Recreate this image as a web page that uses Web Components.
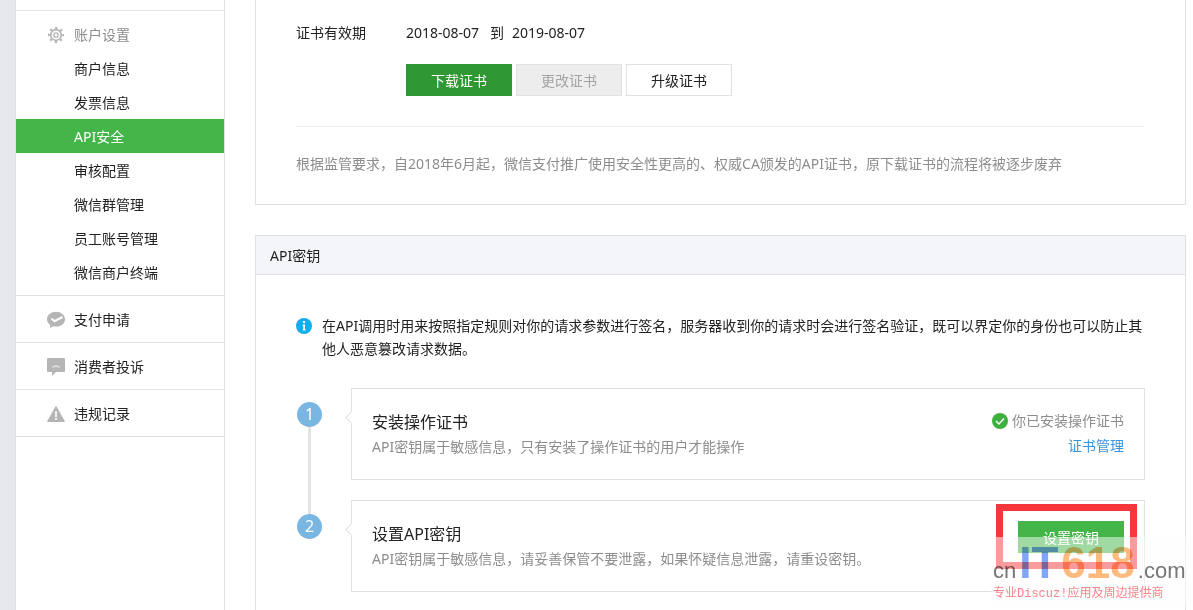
<!DOCTYPE html>
<html lang="zh-CN">
<head>
<meta charset="utf-8">
<title>API安全</title>
<style>
  body {
    margin: 0;
    font: 14px/22px "Noto Sans", "Noto Sans CJK SC", sans-serif;
    color: #222;
    background: #fff;
  }
</style>
</head>
<body>
<merchant-page>
  <side-menu slot="menu">
    <menu-group label="账户设置" icon="gear">
      <menu-item>商户信息</menu-item>
      <menu-item>发票信息</menu-item>
      <menu-item active>API安全</menu-item>
      <menu-item>审核配置</menu-item>
      <menu-item>微信群管理</menu-item>
      <menu-item>员工账号管理</menu-item>
      <menu-item>微信商户终端</menu-item>
    </menu-group>
    <menu-group label="支付申请" icon="pay" folded></menu-group>
    <menu-group label="消费者投诉" icon="chat" folded></menu-group>
    <menu-group label="违规记录" icon="warn" folded></menu-group>
  </side-menu>
  <cert-panel></cert-panel>
  <key-panel>
    <step-card number="1" heading="安装操作证书">
      API密钥属于敏感信息，只有安装了操作证书的用户才能操作
      <cert-status slot="action"></cert-status>
    </step-card>
    <step-card number="2" heading="设置API密钥" last>
      API密钥属于敏感信息，请妥善保管不要泄露，如果怀疑信息泄露，请重设密钥。
      <mark-box slot="action"><ui-button kind="primary">设置密钥</ui-button></mark-box>
    </step-card>
  </key-panel>
  <site-stamp slot="stamp"></site-stamp>
</merchant-page>

<script>
const ICONS = {
  gear: `<svg viewBox="0 0 18 18" width="18" height="18" fill="none" stroke="#b5b5b5">
    <circle cx="9" cy="9" r="5.3" stroke-width="1.7"/>
    <circle cx="9" cy="9" r="2.2" stroke-width="1.3"/>
    <circle cx="9" cy="9" r="7.1" stroke-width="2" stroke-dasharray="2.4 3.176" stroke-dashoffset="1.2"/>
  </svg>`,
  pay: `<svg viewBox="0 0 18 18" width="18" height="18">
    <path d="M9 .8C4 .8 0 4 0 8.200c0 2.300 1.300 4.300 3.300 5.700L3 17l3.200-1.700c.9.200 1.800.3 2.800.3 5 0 9-3.300 9-7.400S14 .8 9 .8z" fill="#b5b5b5"/>
    <path d="M4.500 7.500l3 2.700 8-4.200" fill="none" stroke="#fff" stroke-width="2"/>
  </svg>`,
  chat: `<svg viewBox="0 0 18 18" width="18" height="18">
    <path d="M1 0h16q1 0 1 1v12q0 1-1 1H9l-4 4v-4H1q-1 0-1-1V1q0-1 1-1z" fill="#b5b5b5"/>
    <path d="M5.500 9.500q3.500-3 7 0" fill="none" stroke="#e6e6e6" stroke-width="1.400"/>
  </svg>`,
  warn: `<svg viewBox="0 0 18 18" width="18" height="18">
    <path d="M9 1.500L17.500 16.500H.5z" fill="#b5b5b5" stroke="#b5b5b5" stroke-linejoin="round"/>
    <path d="M9 6v6M9 13v2" stroke="#fff" stroke-width="1.600"/>
  </svg>`,
};

class MerchantPage extends HTMLElement {
  constructor() {
    super();
    this.attachShadow({ mode: "open" });
    this.shadowRoot.innerHTML = `
      <style>
        :host {
          position: relative;
          display: flex;
          min-height: 100vh;
        }
        .edge {
          flex: none;
          width: 15px;
          background: #e6e8ec;
          border-right: 1px solid #dcdee3;
        }
        main {
          flex: 1;
          display: flex;
          flex-direction: column;
          min-width: 0;
          padding: 0 7px 0 30px;
        }
      </style>
      <div class="edge"></div>
      <slot name="menu"></slot>
      <main><slot></slot></main>
      <slot name="stamp"></slot>
    `;
  }
}

class SideMenu extends HTMLElement {
  constructor() {
    super();
    this.attachShadow({ mode: "open" });
    this.shadowRoot.innerHTML = `
      <style>
        :host {
          flex: none;
          width: 208px;
          padding-top: 10px;
          border-right: 1px solid #e0e1e5;
        }
        nav {
          border-top: 1px solid #e0e1e5;
        }
      </style>
      <nav><slot></slot></nav>
    `;
  }
}

class MenuGroup extends HTMLElement {
  constructor() {
    super();
    this.attachShadow({ mode: "open" });
    this.shadowRoot.innerHTML = `
      <style>
        :host {
          display: block;
          padding: 6px 0;
          border-bottom: 1px solid #e0e1e5;
        }
        .head {
          display: flex;
          align-items: center;
          gap: 9px;
          padding: 2px 0 0 31px;
          line-height: 32px;
          color: #8d8d8d;
        }
        :host([folded]) .head {
          color: #222;
        }
        svg {
          display: block;
        }
      </style>
      <div class="head">${ICONS[this.getAttribute("icon")]}<span></span></div>
      <slot></slot>
    `;
    this.shadowRoot.querySelector("span").textContent = this.getAttribute("label");
  }
}

class MenuItem extends HTMLElement {
  constructor() {
    super();
    this.attachShadow({ mode: "open" });
    this.shadowRoot.innerHTML = `
      <style>
        :host {
          display: block;
        }
        a {
          display: block;
          padding: 2px 0 0 58px;
          line-height: 32px;
          color: inherit;
          text-decoration: none;
        }
        :host([active]) a {
          color: #fff;
          background: #44b549;
        }
      </style>
      <a href="#"><slot></slot></a>
    `;
  }
}

class UiButton extends HTMLElement {
  constructor() {
    super();
    this.attachShadow({ mode: "open" });
    this.shadowRoot.innerHTML = `
      <style>
        :host {
          display: block;
        }
        button {
          display: block;
          width: 106px;
          height: 32px;
          padding: 2px 0 0;
          border: 1px solid #e0e1e5;
          background: #fff;
          color: #222;
          font: inherit;
        }
        :host([kind="primary"]) button {
          border-color: #44b549;
          background: #44b549;
          color: #fff;
        }
        :host([kind="pressed"]) button {
          border-color: #2f9833;
          background: #2f9833;
          color: #fff;
        }
        button:disabled {
          background: #ededed;
          color: #a3a3a3;
        }
      </style>
      <button type="button"><slot></slot></button>
    `;
    this.shadowRoot.querySelector("button").disabled = this.hasAttribute("disabled");
  }
}

class CertPanel extends HTMLElement {
  constructor() {
    super();
    this.attachShadow({ mode: "open" });
    this.shadowRoot.innerHTML = `
      <style>
        :host {
          display: block;
          padding: 22px 40px 29px;
          border: 1px solid #e0e1e5;
          border-top: 0;
        }
        .row {
          display: flex;
        }
        .label {
          flex: none;
          width: 110px;
        }
        .dates {
          display: flex;
          gap: 8px;
        }
        time {
          min-width: 76px;
        }
        .buttons {
          display: flex;
          gap: 4px;
          margin-top: 20px;
        }
        p {
          margin: 30px 0 0;
          padding-top: 26px;
          border-top: 1px solid #efefef;
          color: #8d8d8d;
        }
      </style>
      <div class="row">
        <div class="label">证书有效期</div>
        <div>
          <div class="dates"><time>2018-08-07</time><span>到</span><time>2019-08-07</time></div>
          <div class="buttons">
            <ui-button kind="pressed">下载证书</ui-button>
            <ui-button disabled>更改证书</ui-button>
            <ui-button>升级证书</ui-button>
          </div>
        </div>
      </div>
      <p>根据监管要求，自2018年6月起，微信支付推广使用安全性更高的、权威CA颁发的API证书，原下载证书的流程将被逐步废弃</p>
    `;
  }
}

class KeyPanel extends HTMLElement {
  constructor() {
    super();
    this.attachShadow({ mode: "open" });
    this.shadowRoot.innerHTML = `
      <style>
        :host {
          flex: 1;
          display: block;
          margin-top: 30px;
          border: 1px solid #e0e1e5;
          border-bottom: 0;
        }
        h2 {
          margin: 0;
          padding: 2px 14px 0;
          border-bottom: 1px solid #e0e1e5;
          background: #f4f5f9;
          font-size: 14px;
          font-weight: normal;
          line-height: 36px;
        }
        .body {
          padding: 39px 40px 0;
        }
        .tip {
          display: flex;
          gap: 10px;
          margin-bottom: 28px;
        }
        .tip svg {
          flex: none;
          margin-top: 4px;
        }
        .tip p {
          margin: 0;
          line-height: 23px;
        }
      </style>
      <h2>API密钥</h2>
      <div class="body">
        <div class="tip">
          <svg viewBox="0 0 16 16" width="16" height="16">
            <circle cx="8" cy="8" r="8" fill="#10aeeb"/>
            <path d="M7 3h2v2H7zM6.500 6.500H9V12H7.200V7.500h-.7zM6.500 11.500h3.200v1H6.500z" fill="#fff"/>
          </svg>
          <p>在API调用时用来按照指定规则对你的请求参数进行签名，服务器收到你的请求时会进行签名验证，既可以界定你的身份也可以防止其他人恶意篡改请求数据。</p>
        </div>
        <slot></slot>
      </div>
    `;
  }
}

class StepCard extends HTMLElement {
  constructor() {
    super();
    this.attachShadow({ mode: "open" });
    this.shadowRoot.innerHTML = `
      <style>
        :host {
          display: flex;
          gap: 28px;
        }
        .rail {
          flex: none;
          display: flex;
          flex-direction: column;
          align-items: center;
          width: 27px;
        }
        .rail::before, .rail::after {
          content: "";
          width: 3px;
          height: 14px;
          background: #e4e4e4;
        }
        .rail::after {
          flex: 1;
        }
        :host([number="1"]) .rail::before,
        :host([last]) .rail::after {
          background: none;
        }
        .number {
          width: 25px;
          height: 25px;
          border-radius: 50%;
          background: #7ab6e2;
          color: #fff;
          font-size: 16px;
          line-height: 25px;
          text-align: center;
        }
        .card {
          position: relative;
          flex: 1;
          display: flex;
          justify-content: space-between;
          margin-bottom: 20px;
          padding: 20px;
          border: 1px solid #e0e1e5;
        }
        :host([last]) .card {
          margin-bottom: 0;
        }
        .card::before {
          content: "";
          position: absolute;
          top: 24px;
          left: -5px;
          width: 8px;
          height: 8px;
          border: 1px solid #e0e1e5;
          border-width: 0 0 1px 1px;
          background: #fff;
          transform: rotate(45deg);
        }
        h3 {
          margin: 0;
          font-size: 16px;
          font-weight: normal;
          line-height: 26px;
        }
        p {
          margin: 0;
          color: #8d8d8d;
          line-height: 24px;
        }
      </style>
      <div class="rail"><div class="number"></div></div>
      <div class="card">
        <div><h3></h3><p><slot></slot></p></div>
        <slot name="action"></slot>
      </div>
    `;
    this.shadowRoot.querySelector(".number").textContent = this.getAttribute("number");
    this.shadowRoot.querySelector("h3").textContent = this.getAttribute("heading");
  }
}

class CertStatus extends HTMLElement {
  constructor() {
    super();
    this.attachShadow({ mode: "open" });
    this.shadowRoot.innerHTML = `
      <style>
        :host {
          display: block;
          text-align: right;
        }
        .state {
          display: flex;
          align-items: center;
          gap: 4px;
          height: 24px;
          color: #8d8d8d;
        }
        a {
          color: #3d93d9;
          line-height: 26px;
          text-decoration: none;
        }
      </style>
      <div class="state">
        <svg viewBox="0 0 16 16" width="16" height="16">
          <circle cx="8" cy="8" r="8" fill="#3db040"/>
          <path d="M4 8l3 3 5-5.500" fill="none" stroke="#fff" stroke-width="1.400"/>
        </svg>
        <span>你已安装操作证书</span>
      </div>
      <a href="#">证书管理</a>
    `;
  }
}

class MarkBox extends HTMLElement {
  constructor() {
    super();
    this.attachShadow({ mode: "open" });
    this.shadowRoot.innerHTML = `
      <style>
        :host {
          position: relative;
          align-self: flex-start;
        }
        .frame {
          position: absolute;
          inset: -17px -13px -16px -22px;
          border: 7px solid #f5373b;
          pointer-events: none;
        }
      </style>
      <slot></slot>
      <div class="frame"></div>
    `;
  }
}

class SiteStamp extends HTMLElement {
  constructor() {
    super();
    this.attachShadow({ mode: "open" });
    this.shadowRoot.innerHTML = `
      <style>
        :host {
          position: absolute;
          right: 0;
          bottom: 5px;
          width: 202px;
          height: 68px;
          background: rgba(253, 253, 253, 0.5);
          font-family: "Liberation Sans", "Noto Sans CJK SC", sans-serif;
          pointer-events: none;
        }
        .name {
          display: flex;
          align-items: baseline;
          gap: 3px;
          padding: 4px 0 0 2px;
          color: #777;
          font-size: 22px;
          line-height: 1;
          mix-blend-mode: multiply;
        }
        b {
          font-size: 44px;
        }
        .it {
          color: #7fa6fb;
        }
        .num {
          color: #fdbb80;
        }
        .slogan {
          margin-top: 2px;
          padding-left: 2px;
          color: #f8838c;
          font: 12px/14px "Liberation Mono", "Noto Sans CJK SC", monospace;
        }
      </style>
      <div class="name"><span>cn</span><b class="it">IT</b><b class="num">618</b><span>.com</span></div>
      <div class="slogan">专业Discuz!应用及周边提供商</div>
    `;
  }
}

customElements.define("merchant-page", MerchantPage);
customElements.define("side-menu", SideMenu);
customElements.define("menu-group", MenuGroup);
customElements.define("menu-item", MenuItem);
customElements.define("ui-button", UiButton);
customElements.define("cert-panel", CertPanel);
customElements.define("key-panel", KeyPanel);
customElements.define("step-card", StepCard);
customElements.define("cert-status", CertStatus);
customElements.define("mark-box", MarkBox);
customElements.define("site-stamp", SiteStamp);
</script>
</body>
</html>
